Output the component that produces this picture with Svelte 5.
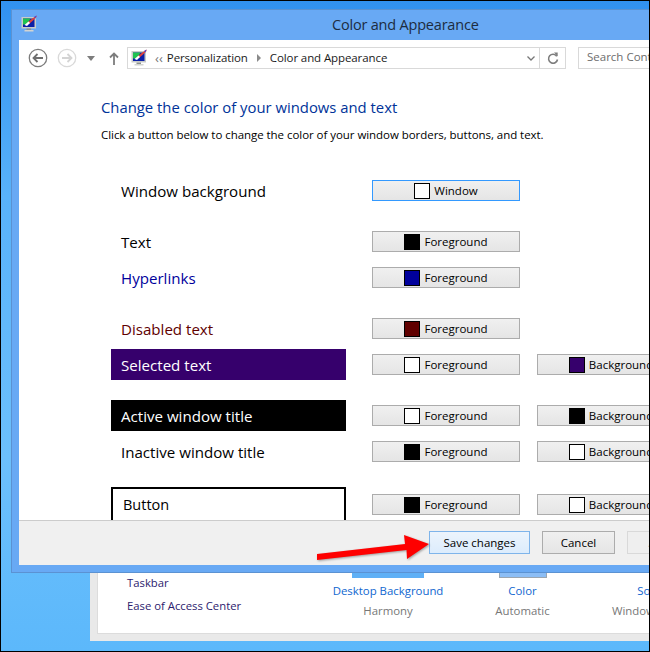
<script>
  const rows = [
    { label: 'Window background', fg: { name: 'Window', color: '#fff' }, focus: true },
    { label: 'Text', fg: { name: 'Foreground', color: '#000' }, group: true },
    { label: 'Hyperlinks', kind: 'link', fg: { name: 'Foreground', color: '#00009c' } },
    { label: 'Disabled text', kind: 'disabled', fg: { name: 'Foreground', color: '#600000' }, group: true },
    { label: 'Selected text', kind: 'selected', fg: { name: 'Foreground', color: '#fff' }, bg: { name: 'Background', color: '#36006c' } },
    { label: 'Active window title', kind: 'active', fg: { name: 'Foreground', color: '#fff' }, bg: { name: 'Background', color: '#000' }, group: true },
    { label: 'Inactive window title', fg: { name: 'Foreground', color: '#000' }, bg: { name: 'Background', color: '#fff' } },
    { label: 'Button', kind: 'outlined', fg: { name: 'Foreground', color: '#000' }, bg: { name: 'Background', color: '#fff' }, group: true }
  ];

  const items = [
    { name: 'Desktop Background', sub: 'Harmony', thumb: 'wide' },
    { name: 'Color', sub: 'Automatic', thumb: 'tile' },
    { name: 'Sounds', sub: 'Windows Default' }
  ];
</script>

{#snippet monitor()}
  <svg class="monitor" viewBox="0 0 16 18">
    <rect x="0.5" y="2" width="14.500" height="11.500" fill="#c9ccc8" />
    <rect x="2" y="3.500" width="11.500" height="8.500" fill="#0b1fa8" />
    <path d="M2 3.500h7.500L6 9.500H2z" fill="#1fc24f" />
    <path d="M15.500 0.500L10 4.500 6.500 7.500l1.500 1.500 3.500-3 4-4z" fill="#e0403a" />
    <path d="M15.500 0.500l-2.500 1.500 1.500 1.500z" fill="#4f4ad0" />
    <path d="M7.500 6.500L3.500 10l2.500 1 3-3z" fill="#fff" />
    <rect x="5.500" y="13.500" width="4.500" height="1.500" fill="#8d918d" />
    <rect x="3.500" y="15" width="9" height="1.500" fill="#d2d4d2" />
  </svg>
{/snippet}

{#snippet colorButton(part, focus)}
  <button class="color-btn" class:focus>
    <span class="swatch" style="background: {part.color}"></span>
    {part.name}
  </button>
{/snippet}

<div class="desktop">
  <div class="back-window">
    <div class="back-inner">
      <div class="see-also">
        <span>Taskbar</span>
        <span>Ease of Access Center</span>
      </div>
      {#each items as item}
        <div class="item">
          {#if item.thumb}<div class="thumb {item.thumb}"></div>{/if}
          <span class="item-name">{item.name}</span>
          <span class="item-sub">{item.sub}</span>
        </div>
      {/each}
    </div>
  </div>

  <div class="window">
    <header class="titlebar">
      <span class="title-icon">{@render monitor()}</span>
      <span class="title">Color and Appearance</span>
    </header>

    <div class="client">
      <nav class="toolbar">
        <svg class="nav-btn" viewBox="0 0 20 20">
          <circle cx="10" cy="10" r="8.700" fill="none" stroke="#7c7c7c" stroke-width="1.300" />
          <path d="M15 10H6M9.500 6L5.500 10l4 4" fill="none" stroke="#6e6e6e" stroke-width="1.800" />
        </svg>
        <svg class="nav-btn forward" viewBox="0 0 20 20">
          <circle cx="10" cy="10" r="8.700" fill="none" stroke="#d9d9d9" stroke-width="1.300" />
          <path d="M5 10h9M10.500 6l4 4-4 4" fill="none" stroke="#d4d4d4" stroke-width="1.800" />
        </svg>
        <svg class="caret" viewBox="0 0 8 5"><path d="M0 0h8L4 5z" fill="#7d7d7d" /></svg>
        <svg class="up" viewBox="0 0 10 13">
          <path d="M5 13V2M1 5.500L5 1.500l4 4" fill="none" stroke="#7d7d7d" stroke-width="1.800" />
        </svg>

        <div class="address">
          {@render monitor()}
          <span class="chevrons">‹‹</span>
          <span class="crumb">Personalization</span>
          <svg class="crumb-sep" viewBox="0 0 4 8"><path d="M0 0l4 4-4 4z" fill="#8a8a8a" /></svg>
          <span class="crumb">Color and Appearance</span>
          <svg class="drop" viewBox="0 0 8 5">
            <path d="M0.500 0.500L4 4l3.500-3.500" fill="none" stroke="#777" stroke-width="1.300" />
          </svg>
          <span class="refresh">
            <svg viewBox="0 0 12 13">
              <path d="M9.800 4.200A4.500 4.500 0 1 0 10.500 7.500" fill="none" stroke="#7d7d7d" stroke-width="1.600" />
              <path d="M7 0.500h3.700v4z" fill="#7d7d7d" />
            </svg>
          </span>
        </div>

        <div class="search">Search Control Panel</div>
      </nav>

      <main class="content">
        <h1>Change the color of your windows and text</h1>
        <p>Click a button below to change the color of your window borders, buttons, and text.</p>

        <div class="rows">
          {#each rows as row}
            <div class="row" class:group={row.group}>
              <div class="label {row.kind ?? ''}">{row.label}</div>
              {@render colorButton(row.fg, row.focus)}
              {#if row.bg}{@render colorButton(row.bg, false)}{/if}
            </div>
          {/each}
        </div>
      </main>

      <footer class="footer">
        <button class="action save">Save changes</button>
        <button class="action">Cancel</button>
        <button class="action apply" disabled>Apply</button>
      </footer>
    </div>
  </div>

  <svg class="pointer" viewBox="0 0 130 40">
    <polygon points="7,29 95,19 94,10 119,19 97,34 96.500,25 7,35" fill="#fe0000" />
  </svg>
</div>

<style>
  :global(body) {
    margin: 0;
  }

  .desktop {
    position: relative;
    box-sizing: border-box;
    width: 650px;
    height: 652px;
    border: 1px solid #000;
    overflow: hidden;
    font-family: "Open Sans", "Noto Sans", sans-serif;
    background: linear-gradient(180deg, #3191f0 0, #58b2fa 30%, #6cc0fc 70%, #5cb8fb 100%);
  }

  .back-window {
    position: absolute;
    left: 89px;
    top: 480px;
    width: 640px;
    height: 160px;
    box-sizing: border-box;
    padding: 7px;
    background: #e9e9e9;
  }

  .back-inner {
    display: flex;
    align-items: flex-end;
    height: 100%;
    box-sizing: border-box;
    padding: 0 0 15px 29px;
    background: #fff;
    border: 1px solid #dcdcdc;
  }

  .see-also {
    display: flex;
    flex-direction: column;
    gap: 8px;
    flex: none;
    width: 206px;
    margin-bottom: 5px;
    font-size: 11.300px;
    color: #2c1b6e;
  }

  .see-also span {
    height: 15px;
    line-height: 15px;
  }

  .item {
    display: flex;
    flex-direction: column;
    align-items: center;
    gap: 5px;
    flex: none;
    width: 110px;
    margin-right: 24.500px;
    font-size: 11.400px;
    white-space: nowrap;
  }

  .item-name {
    color: #0f66d0;
  }

  .item-sub {
    color: #777;
  }

  .thumb {
    height: 8px;
    background: #5fb0f6;
  }

  .thumb.wide {
    width: 72px;
  }

  .thumb.tile {
    box-sizing: border-box;
    width: 48px;
    background: #8bbdf5;
    border: 1px solid #9aa5b0;
  }

  .window {
    position: absolute;
    left: 10px;
    top: 8px;
    width: 720px;
    height: 564px;
    box-sizing: border-box;
    display: flex;
    flex-direction: column;
    padding: 0 7px 7px;
    background: #68a9f4;
    border: 1px solid #5b92d2;
  }

  .titlebar {
    display: flex;
    align-items: center;
    height: 30px;
    padding-bottom: 2px;
    box-sizing: border-box;
    flex: none;
  }

  .title-icon {
    display: flex;
    margin-left: 2px;
  }

  .title {
    margin-left: 295px;
    font-size: 14.500px;
    letter-spacing: -0.2px;
    color: #1d2c3f;
    white-space: nowrap;
  }

  .client {
    flex: 1;
    min-height: 0;
    display: flex;
    flex-direction: column;
    background: #fff;
  }

  .toolbar {
    display: flex;
    align-items: center;
    height: 22px;
    margin-top: 7px;
    flex: none;
  }

  .monitor {
    width: 16px;
    height: 18px;
    flex: none;
  }

  .nav-btn {
    width: 20px;
    height: 20px;
    margin-left: 9px;
    flex: none;
  }

  .caret {
    width: 8px;
    height: 5px;
    margin-left: 10px;
    flex: none;
  }

  .up {
    width: 10px;
    height: 13px;
    margin-left: 14px;
    flex: none;
  }

  .address {
    display: flex;
    align-items: center;
    width: 439px;
    height: 22px;
    margin-left: 8px;
    padding-left: 3px;
    box-sizing: border-box;
    border: 1px solid #d9d9d9;
    font-size: 11.500px;
    color: #1a1a1a;
    flex: none;
  }

  .chevrons {
    margin: 0 4px 0 8px;
    font-size: 13px;
    line-height: 1;
    color: #777;
  }

  .crumb {
    padding-bottom: 2px;
    letter-spacing: -0.1px;
    white-space: nowrap;
  }

  .crumb-sep {
    width: 4px;
    height: 8px;
    margin: 0 9px;
    flex: none;
  }

  .drop {
    width: 8px;
    height: 5px;
    margin-left: auto;
    flex: none;
  }

  .refresh {
    display: flex;
    align-items: center;
    justify-content: center;
    width: 25px;
    height: 100%;
    margin-left: 4px;
    border-left: 1px solid #d9d9d9;
  }

  .refresh svg {
    width: 12px;
    height: 13px;
  }

  .search {
    width: 200px;
    height: 22px;
    margin-left: 12px;
    padding-left: 8px;
    box-sizing: border-box;
    border: 1px solid #d9d9d9;
    font-size: 11.500px;
    line-height: 18px;
    color: #6d6d6d;
    white-space: nowrap;
    flex: none;
  }

  .content {
    flex: 1;
    min-height: 0;
    overflow: hidden;
    padding: 28px 0 0 82px;
  }

  h1 {
    margin: 0;
    font-size: 14.850px;
    line-height: 20px;
    font-weight: 400;
    color: #003399;
    white-space: nowrap;
  }

  p {
    margin: 10px 0 0;
    font-size: 11.500px;
    letter-spacing: -0.05px;
    line-height: 16px;
    color: #000;
    white-space: nowrap;
  }

  .rows {
    display: flex;
    flex-direction: column;
    gap: 5px;
    margin: 32px 0 0 10px;
  }

  .row {
    display: grid;
    grid-template-columns: 235px 148px 148px;
    column-gap: 26px;
    align-items: center;
  }

  .row.group {
    margin-top: 15px;
  }

  .row .color-btn:nth-child(3) {
    margin-left: -9px;
  }

  .label {
    box-sizing: border-box;
    height: 31px;
    padding-left: 10px;
    font-size: 15.100px;
    line-height: 32px;
    color: #000;
    white-space: nowrap;
  }

  .label.link {
    color: #00009c;
  }

  .label.disabled {
    color: #600000;
  }

  .label.selected {
    background: #36006c;
    color: #fff;
  }

  .label.active {
    background: #000;
    color: #fff;
  }

  .label.outlined {
    height: 35px;
    line-height: 31px;
    font-size: 14.500px;
    border: 2px solid #000;
  }

  .color-btn {
    display: flex;
    align-items: center;
    justify-content: center;
    gap: 4px;
    box-sizing: border-box;
    width: 148px;
    height: 21px;
    padding: 0;
    border: 1px solid #acacac;
    background: linear-gradient(180deg, #f0f0f0, #e5e5e5);
    font: inherit;
    font-size: 11.500px;
    color: #000;
    white-space: nowrap;
  }

  .color-btn.focus {
    border-color: #3399ff;
  }

  .swatch {
    box-sizing: border-box;
    width: 16px;
    height: 16px;
    border: 1px solid #000;
    flex: none;
  }

  .footer {
    display: flex;
    align-items: center;
    gap: 12px;
    flex: none;
    height: 45px;
    box-sizing: border-box;
    padding: 0 0 1px 410px;
    background: #f0f0f0;
    border-top: 1px solid #cccccc;
  }

  .action {
    box-sizing: border-box;
    width: 73px;
    height: 23px;
    padding: 0;
    border: 1px solid #acacac;
    background: linear-gradient(180deg, #f0f0f0, #e5e5e5);
    font: inherit;
    font-size: 11.500px;
    color: #000;
    flex: none;
  }

  .action.save {
    width: 101px;
    border-color: #7eb4ea;
    background: linear-gradient(180deg, #ecf4fc, #dcecfc);
  }

  .action.apply {
    border-color: #d9d9d9;
    background: #efefef;
    color: #a0a0a0;
  }

  .pointer {
    position: absolute;
    left: 309px;
    top: 524px;
    width: 130px;
    height: 40px;
    filter: drop-shadow(1px 1px 1px rgba(0, 0, 0, 0.35));
  }
</style>
